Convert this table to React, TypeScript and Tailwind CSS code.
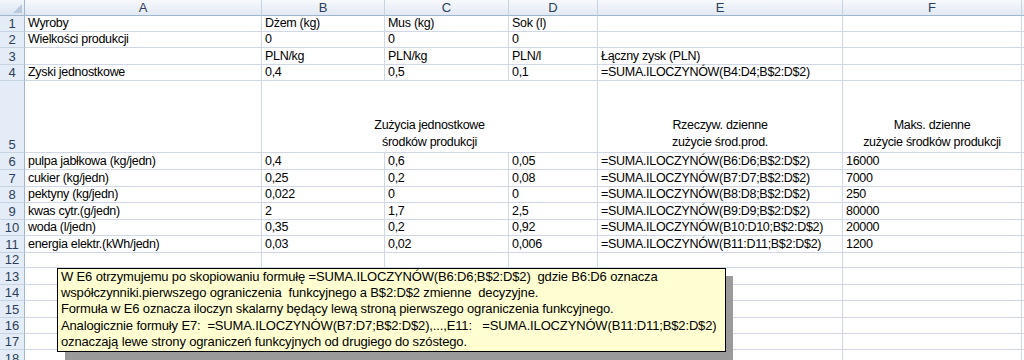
const colW = ['w-[237px]', 'w-[123px]', 'w-[124px]', 'w-[89px]', 'w-[245px]', 'w-[179px]'];
const letters = ['A', 'B', 'C', 'D', 'E', 'F'];

type Row = { n: number; h: string; cells: string[] };

const topRows: Row[] = [
  { n: 1, h: 'h-[16px]', cells: ['Wyroby', 'Dżem (kg)', 'Mus (kg)', 'Sok (l)', '', ''] },
  { n: 2, h: 'h-[16px]', cells: ['Wielkości produkcji', '0', '0', '0', '', ''] },
  { n: 3, h: 'h-[17px]', cells: ['', 'PLN/kg', 'PLN/kg', 'PLN/l', 'Łączny zysk (PLN)', ''] },
  {
    n: 4,
    h: 'h-[16px]',
    cells: ['Zyski jednostkowe', '0,4', '0,5', '0,1', '=SUMA.ILOCZYNÓW(B4:D4;B$2:D$2)', ''],
  },
];

const bottomRows: Row[] = [
  { n: 6, h: 'h-[17px]', cells: ['pulpa jabłkowa (kg/jedn)', '0,4', '0,6', '0,05', '=SUMA.ILOCZYNÓW(B6:D6;B$2:D$2)', '16000'] },
  { n: 7, h: 'h-[17px]', cells: ['cukier (kg/jedn)', '0,25', '0,2', '0,08', '=SUMA.ILOCZYNÓW(B7:D7;B$2:D$2)', '7000'] },
  { n: 8, h: 'h-[16px]', cells: ['pektyny (kg/jedn)', '0,022', '0', '0', '=SUMA.ILOCZYNÓW(B8:D8;B$2:D$2)', '250'] },
  { n: 9, h: 'h-[17px]', cells: ['kwas cytr.(g/jedn)', '2', '1,7', '2,5', '=SUMA.ILOCZYNÓW(B9:D9;B$2:D$2)', '80000'] },
  { n: 10, h: 'h-[16px]', cells: ['woda (l/jedn)', '0,35', '0,2', '0,92', '=SUMA.ILOCZYNÓW(B10:D10;B$2:D$2)', '20000'] },
  { n: 11, h: 'h-[17px]', cells: ['energia elektr.(kWh/jedn)', '0,03', '0,02', '0,006', '=SUMA.ILOCZYNÓW(B11:D11;B$2:D$2)', '1200'] },
  { n: 12, h: 'h-[15px]', cells: ['', '', '', '', '', ''] },
  { n: 13, h: 'h-[17px]', cells: ['', '', '', '', '', ''] },
  { n: 14, h: 'h-[16px]', cells: ['', '', '', '', '', ''] },
  { n: 15, h: 'h-[17px]', cells: ['', '', '', '', '', ''] },
  { n: 16, h: 'h-[16px]', cells: ['', '', '', '', '', ''] },
  { n: 17, h: 'h-[16px]', cells: ['', '', '', '', '', ''] },
  { n: 18, h: 'h-[17px]', cells: ['', '', '', '', '', ''] },
];

const note = [
  'W E6 otrzymujemu po skopiowaniu formułę =SUMA.ILOCZYNÓW(B6:D6;B$2:D$2)  gdzie B6:D6 oznacza',
  'współczynniki.pierwszego ograniczenia  funkcyjnego a B$2:D$2 zmienne  decyzyjne.',
  'Formuła w E6 oznacza iloczyn skalarny będący lewą stroną pierwszego ograniczenia funkcyjnego.',
  'Analogicznie formuły E7:  =SUMA.ILOCZYNÓW(B7:D7;B$2:D$2),...,E11:   =SUMA.ILOCZYNÓW(B11:D11;B$2:D$2)',
  'oznaczają lewe strony ograniczeń funkcyjnych od drugiego do szóstego.',
];

function RowHead({ n, h }: { n: number; h: string }) {
  return (
    <div
      className={`${h} w-[25px] shrink-0 flex items-end justify-center border-r border-b border-r-[#9eb6ce] border-b-[#c5d3e3] bg-[#e4ecf7] text-[13px] leading-[15px] tracking-normal text-[#2c3e5a]`}
    >
      {n}
    </div>
  );
}

function DataRow({ row }: { row: Row }) {
  return (
    <div className="flex">
      <RowHead n={row.n} h={row.h} />
      {row.cells.map((c, i) => (
        <div
          key={i}
          className={`${row.h} ${colW[i]} shrink-0 flex items-end overflow-visible whitespace-nowrap border-r border-b border-[#d0d7e5] pl-[3px] leading-[15px]`}
        >
          {c}
        </div>
      ))}
      <div className={`${row.h} flex-1 border-b border-[#d0d7e5]`} />
    </div>
  );
}

export default function App() {
  return (
    <div className="relative h-[360px] w-[1024px] overflow-hidden bg-white font-['Liberation_Sans',Arial,sans-serif] text-[12.5px] tracking-[-0.3px] text-black">
      {/* column headers */}
      <div className="flex h-[16px]">
        <div className="relative w-[25px] shrink-0 border-r border-b border-[#9eb6ce] bg-gradient-to-b from-[#f3f6fb] to-[#dbe4f0]">
          <div className="absolute right-[2px] bottom-[2px] h-0 w-0 border-l-[9px] border-t-[9px] border-l-transparent border-t-transparent border-r-0 border-b-0 [border-bottom:9px_solid_#b9c9dc]" />
        </div>
        {letters.map((l, i) => (
          <div
            key={l}
            className={`${colW[i]} shrink-0 flex items-center justify-center border-r border-b border-r-[#c5d3e3] border-b-[#9eb6ce] bg-gradient-to-b from-[#f7f9fc] to-[#e2e9f3] text-[13px] leading-[15px] tracking-normal text-[#2c3e5a]`}
          >
            {l}
          </div>
        ))}
        <div className="flex-1 border-b border-[#9eb6ce] bg-gradient-to-b from-[#f7f9fc] to-[#e2e9f3]" />
      </div>

      {topRows.map((r) => (
        <DataRow key={r.n} row={r} />
      ))}

      {/* row 5 with merged header */}
      <div className="flex">
        <RowHead n={5} h="h-[72px]" />
        <div className="h-[72px] w-[237px] shrink-0 border-r border-b border-[#d0d7e5]" />
        <div className="flex h-[72px] w-[336px] shrink-0 flex-col items-center justify-end border-r border-b border-[#d0d7e5] pb-[1px] leading-[17px]">
          <span>Zużycia jednostkowe</span>
          <span>środków produkcji</span>
        </div>
        <div className="flex h-[72px] w-[245px] shrink-0 flex-col items-center justify-end border-r border-b border-[#d0d7e5] pb-[1px] leading-[17px]">
          <span>Rzeczyw. dzienne</span>
          <span>zużycie środ.prod.</span>
        </div>
        <div className="flex h-[72px] w-[179px] shrink-0 flex-col items-center justify-end border-r border-b border-[#d0d7e5] pb-[1px] leading-[17px]">
          <span>Maks. dzienne</span>
          <span>zużycie środków produkcji</span>
        </div>
        <div className="h-[72px] flex-1 border-b border-[#d0d7e5]" />
      </div>

      {bottomRows.map((r) => (
        <DataRow key={r.n} row={r} />
      ))}

      {/* comment box */}
      <div className="absolute left-[65px] top-[276px] h-[84px] w-[668px] bg-[#9a9a9a]" />
      <div className="absolute left-[57px] top-[268px] h-[84px] w-[669px] border border-black bg-[#ffffd2] pl-[3px] text-[13px] tracking-[-0.15px]">
        {note.map((line, i) => (
          <div key={i} className="whitespace-pre leading-[16.2px]">
            {line}
          </div>
        ))}
      </div>
    </div>
  );
}
